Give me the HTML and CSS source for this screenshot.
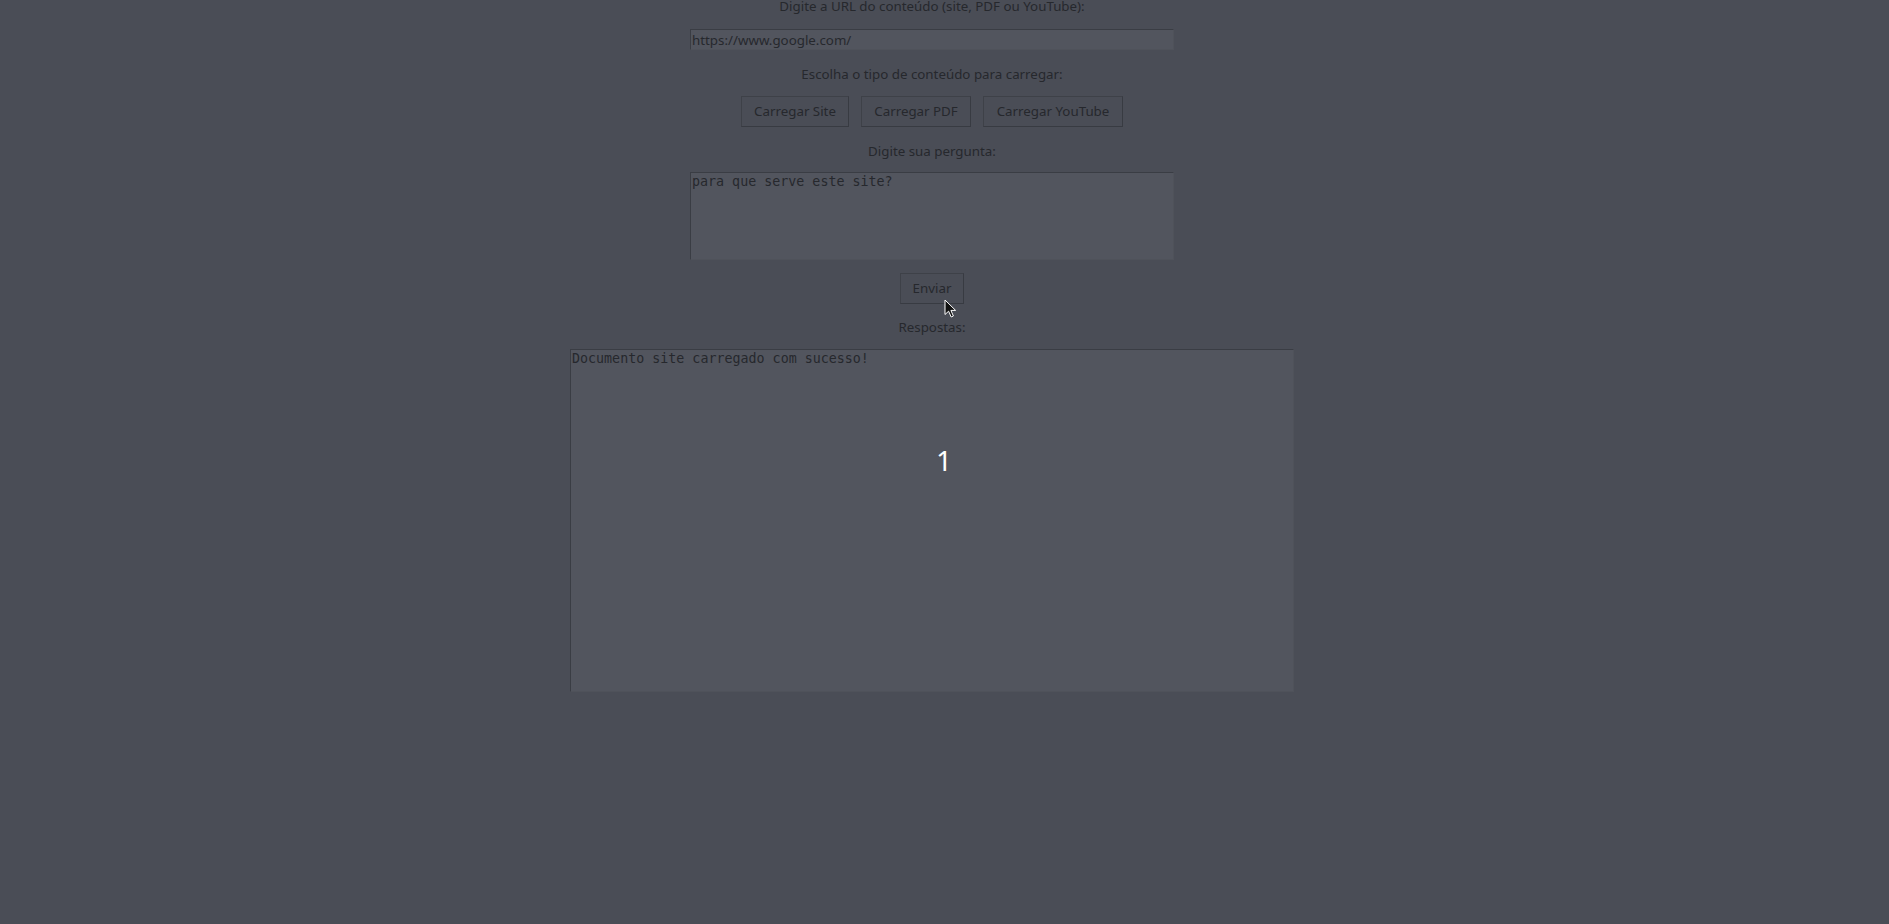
FILE: index.html
```html
<!DOCTYPE html>
<html lang="pt">
<head>
<meta charset="utf-8">
<title>Chat com documentos</title>
<link rel="stylesheet" href="styles.css">
</head>
<body>
<main class="app">
  <label class="lbl lbl-first">Digite a URL do conteúdo (site, PDF ou YouTube):</label>
  <input class="field url" type="text" value="https://www.google.com/">
  <label class="lbl lbl-type">Escolha o tipo de conteúdo para carregar:</label>
  <div class="btn-row">
    <button class="btn btn-site">Carregar Site</button>
    <button class="btn btn-pdf">Carregar PDF</button>
    <button class="btn btn-yt">Carregar YouTube</button>
  </div>
  <label class="lbl lbl-q">Digite sua pergunta:</label>
  <textarea class="field mono question">para que serve este site?</textarea>
  <button class="btn btn-send">Enviar</button>
  <label class="lbl lbl-resp">Respostas:</label>
  <div class="answer-wrap">
    <textarea class="field mono answer">Documento site carregado com sucesso!</textarea>
    <span class="marker">1</span>
  </div>
</main>
<svg class="cursor" width="14" height="20" viewBox="0 0 14 20" aria-hidden="true">
  <path d="M1 1 L1 15.5 L4.6 12.2 L7.2 18 L9.4 17 L6.9 11.4 L11.6 11.4 Z" fill="#111" stroke="#fff" stroke-width="1" stroke-linejoin="round"/>
</svg>
</body>
</html>
```

FILE: styles.css
```css
html, body {
  margin: 0;
  padding: 0;
  background: #4a4d56;
  height: 100%;
  overflow: hidden;
}

body {
  font-family: "Noto Sans", "DejaVu Sans", sans-serif;
  font-size: 13.33px;
  color: #26282d;
  position: relative;
}

.app {
  width: 724px;
  margin-left: 570px;
  margin-top: -3px;
  display: flex;
  flex-direction: column;
  align-items: center;
}

.lbl {
  display: block;
  line-height: 18px;
  height: 18px;
  color: #26282d;
  white-space: nowrap;
}

.lbl-type { margin-top: 15px; }
.lbl-q { margin-top: 15px; }
.lbl-resp { margin-top: 14px; }

.field {
  box-sizing: border-box;
  background: #52555e;
  border-style: solid;
  border-width: 1px;
  border-color: #3a3d44 #4f525a #4f525a #3a3d44;
  color: #26282d;
  margin: 0;
  outline: none;
  resize: none;
  display: block;
}

.url {
  width: 484px;
  height: 21px;
  margin-top: 14px;
  padding: 0 1px;
  font-family: "Noto Sans", "DejaVu Sans", sans-serif;
  font-size: 13.33px;
  line-height: 19px;
}

.mono {
  font-family: "DejaVu Sans Mono", "Liberation Mono", monospace;
  font-size: 13.33px;
  line-height: 16px;
  overflow: hidden;
}

.question {
  width: 484px;
  height: 88px;
  margin-top: 12px;
  padding: 1px 1px;
}

.btn-row {
  display: flex;
  gap: 12px;
  margin-top: 13px;
}

.btn {
  box-sizing: border-box;
  height: 31px;
  padding: 0 12px;
  background: #4a4d56;
  border: 1px solid #3e4148;
  border-right-color: #383b42;
  border-bottom-color: #383b42;
  color: #26282d;
  font-family: "Noto Sans", "DejaVu Sans", sans-serif;
  font-size: 13.33px;
  line-height: 29px;
  cursor: default;
  white-space: nowrap;
}

.btn-site { width: 108px; }
.btn-pdf { width: 110px; }
.btn-yt { width: 140px; }

.btn-send {
  width: 64px;
  margin-top: 13px;
  padding: 0;
}

.answer-wrap {
  position: relative;
  width: 724px;
  height: 343px;
  margin-top: 13px;
}

.answer {
  width: 724px;
  height: 343px;
  padding: 1px 1px 0;
}

.marker {
  position: absolute;
  left: 366px;
  top: 97px;
  font-family: "Noto Sans", "DejaVu Sans", sans-serif;
  font-size: 28px;
  line-height: 28px;
  color: #ffffff;
}

.cursor {
  position: absolute;
  left: 944px;
  top: 299px;
}
```
